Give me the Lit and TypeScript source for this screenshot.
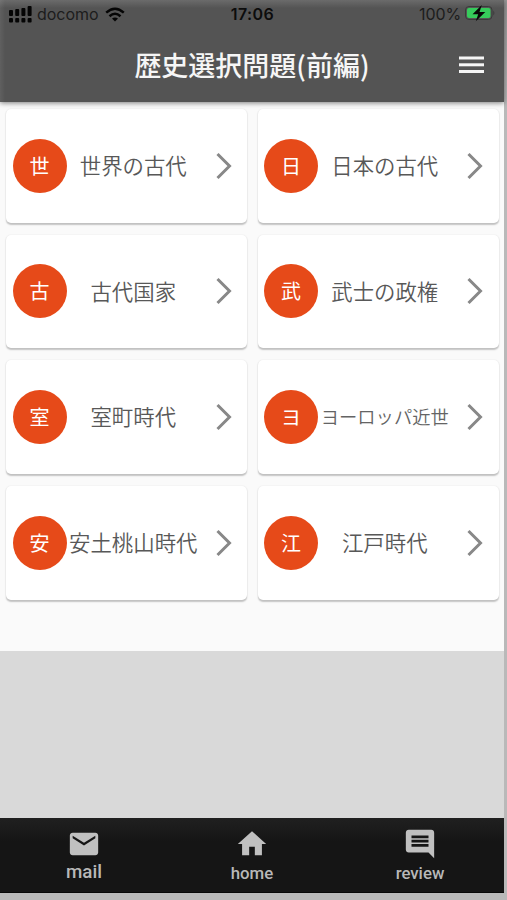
import { LitElement, html, svg, css } from "lit";
import { customElement, property } from "lit/decorators.js";
import { classMap } from "lit/directives/class-map.js";

const units = [
  { mark: "世", name: "世界の古代" },
  { mark: "日", name: "日本の古代" },
  { mark: "古", name: "古代国家" },
  { mark: "武", name: "武士の政権" },
  { mark: "室", name: "室町時代" },
  { mark: "ヨ", name: "ヨーロッパ近世" },
  { mark: "安", name: "安土桃山時代" },
  { mark: "江", name: "江戸時代" },
];

const tabs = [
  { label: "mail", icon: svg`<path d="M20 4H4c-1.100 0-1.990.9-1.990 2L2 18c0 1.100.9 2 2 2h16c1.100 0 2-.9 2-2V6c0-1.100-.9-2-2-2zm0 4l-8 5-8-5V6.200l8 5 8-5v1.800z"/>` },
  { label: "home", icon: svg`<path d="M10 20v-6h4v6h5v-8h3L12 3 2 12h3v8z"/>` },
  { label: "review", icon: svg`<path d="M21.990 4c0-1.100-.890-2-1.990-2H4c-1.100 0-2 .9-2 2v12c0 1.100.9 2 2 2h14l4 4-.010-18zM18 14H6v-2h12v2zm0-3H6V9h12v2zm0-3H6V6h12v2z"/>` },
];

@customElement("status-bar")
export class StatusBar extends LitElement {
  static styles = css`
    :host {
      display: grid;
      grid-template-columns: 1fr auto 1fr;
      align-items: center;
      height: 28px;
      padding: 0 8px 0 9px;
      color: #1c1c1c;
      font: 400 16px/28px Inter, "Liberation Sans", sans-serif;
    }
    .side { display: flex; align-items: center; }
    .right { justify-content: flex-end; }
    .signal { width: 23px; height: 17px; margin-right: 5px; fill: #050505; }
    .carrier { width: 61px; letter-spacing: -0.05px; }
    .wifi { width: 20px; height: 15px; margin-left: 7px; }
    .time { font-weight: 600; letter-spacing: 0.4px; color: #0c0c0c; }
    .battery { width: 32px; height: 18px; margin-left: 3px; }
    .percent { letter-spacing: -0.1px; }
  `;
  render() {
    return html`
      <div class="side">
        <svg class="signal" viewBox="0 0 23 17">
          ${[4, 3, 2, 0].map((top, i) => svg`
            <rect x=${i * 6.2} y=${top} width="4" height=${10 - top} rx="1" />
            <rect x=${i * 6.2} y="12" width="4" height="4.500" rx="1" />`)}
        </svg>
        <span class="carrier">docomo</span>
        <svg class="wifi" viewBox="0 0 20 15">
          <g fill="none" stroke="#050505" stroke-width="2.500">
            <path d="M1.200 5.600Q10-2.200 18.800 5.600" />
            <path d="M4.500 9.200Q10 4.300 15.500 9.200" />
          </g>
          <path d="M7 11.600Q10 9.200 13 11.600L10 14.600Z" fill="#050505" />
        </svg>
      </div>
      <span class="time">17:06</span>
      <div class="side right">
        <span class="percent">100%</span>
        <svg class="battery" viewBox="0 0 32 18">
          <rect x="1.500" y="1.500" width="26.500" height="13" rx="3.500" fill="none" stroke="#3a3a3a" />
          <rect x="3" y="3" width="23.500" height="10" rx="2" fill="#36cb5b" />
          <path d="M29.300 5.500q2.200 2.500 0 5z" fill="#3a3a3a" />
          <path d="M17.800 0L8.500 9.300h5.700L11.800 16.200L21.300 7h-5.800z" fill="#080808" />
        </svg>
      </div>`;
  }
}

@customElement("unit-card")
export class UnitCard extends LitElement {
  @property() mark = "";
  @property() name = "";
  static styles = css`
    :host {
      display: grid;
      grid-template-columns: 54px 1fr 48px;
      align-items: center;
      box-sizing: border-box;
      padding-left: 6.5px;
      padding-bottom: 0.5px;
      border-radius: 5px;
      background: #fff;
      box-shadow: 0 1.5px 1.5px rgba(0, 0, 0, 0.22), 0 0 2px rgba(0, 0, 0, 0.07);
      font-family: "Noto Sans CJK JP", sans-serif;
    }
    .mark {
      display: grid;
      place-items: center;
      width: 54px;
      height: 54px;
      border-radius: 50%;
      background: #e64a19;
      color: #fff;
      font-size: 20px;
      line-height: 30px;
    }
    .name {
      display: flex;
      justify-content: center;
      white-space: nowrap;
      color: #585858;
      font-size: 21.4px;
      font-weight: 350;
      line-height: 32px;
      padding: 0 0 1px 1px;
    }
    .name.long { font-size: 18.3px; color: #646464; }
    .chevron { width: 16px; height: 28px; margin-left: 16.5px; fill: none; stroke: #888; stroke-width: 3; }
  `;
  render() {
    return html`
      <span class="mark">${this.mark}</span>
      <span class=${classMap({ name: true, long: this.name.length > 6 })}>${this.name}</span>
      <svg class="chevron" viewBox="0 0 16 28"><path d="M1.500 2L13.500 14L1.500 26" /></svg>`;
  }
}

@customElement("app-root")
export class AppRoot extends LitElement {
  static styles = css`
    :host {
      display: block;
      box-sizing: border-box;
      height: 900px;
      padding: 0 3px 7px 0;
      background: linear-gradient(#989898, #b9b9b9 100px);
      overflow: hidden;
    }
    .screen { display: flex; flex-direction: column; height: 893px; background: #d9d9d9; }
    header {
      display: flex;
      flex-direction: column;
      height: 102px;
      z-index: 1;
      background: linear-gradient(90deg, rgba(255, 255, 255, 0.07), transparent 5px),
        linear-gradient(#6b6b6b, #545454 8px);
      box-shadow: 0 1px 5px rgba(0, 0, 0, 0.5);
    }
    .bar {
      display: grid;
      grid-template-columns: 60px 1fr 60px;
      align-items: center;
      height: 74px;
    }
    h1 {
      margin: 0;
      text-align: center;
      color: #f6f6f6;
      font: 500 27px/40px "Noto Sans CJK JP", sans-serif;
    }
    .menu { width: 25px; height: 18px; margin-left: 15px; fill: #f6f6f6; }
    main {
      display: grid;
      grid-template-columns: 241px 241px;
      grid-auto-rows: 113.5px;
      gap: 12.2px 10.5px;
      align-content: start;
      box-sizing: border-box;
      height: 549px;
      padding: 7px 0 0 6px;
      background: #fafafa;
    }
    footer {
      display: grid;
      grid-template-columns: repeat(3, 1fr);
      box-sizing: border-box;
      height: 75px;
      margin-top: auto;
      background: linear-gradient(#202020, #151515 24px);
      color: #b8b8b8;
      border-bottom: 1px solid #080808;
    }
    .tab {
      display: flex;
      flex-direction: column;
      align-items: center;
      padding-top: 9px;
      font: 500 16.800px/20px Roboto, sans-serif;
    }
    .tab svg { width: 34px; height: 34px; fill: #c0c0c0; }
    .tab span { margin-top: 2px; }
    .tab.current { font-size: 18.800px; }
    .tab.current span { margin-top: 1px; }
  `;
  render() {
    return html`
      <div class="screen">
        <header>
          <status-bar></status-bar>
          <div class="bar">
            <span></span>
            <h1>歴史選択問題(前編)</h1>
            <svg class="menu" viewBox="0 0 25 18">
              <rect y="0.500" width="25" height="3" /><rect y="7.300" width="25" height="3" /><rect y="14" width="25" height="3" />
            </svg>
          </div>
        </header>
        <main>${units.map((u) => html`<unit-card .mark=${u.mark} .name=${u.name}></unit-card>`)}</main>
        <footer>
          ${tabs.map((t, i) => html`
            <div class=${classMap({ tab: true, current: i === 0 })}>
              <svg viewBox="0 0 24 24">${t.icon}</svg><span>${t.label}</span>
            </div>`)}
        </footer>
      </div>`;
  }
}
